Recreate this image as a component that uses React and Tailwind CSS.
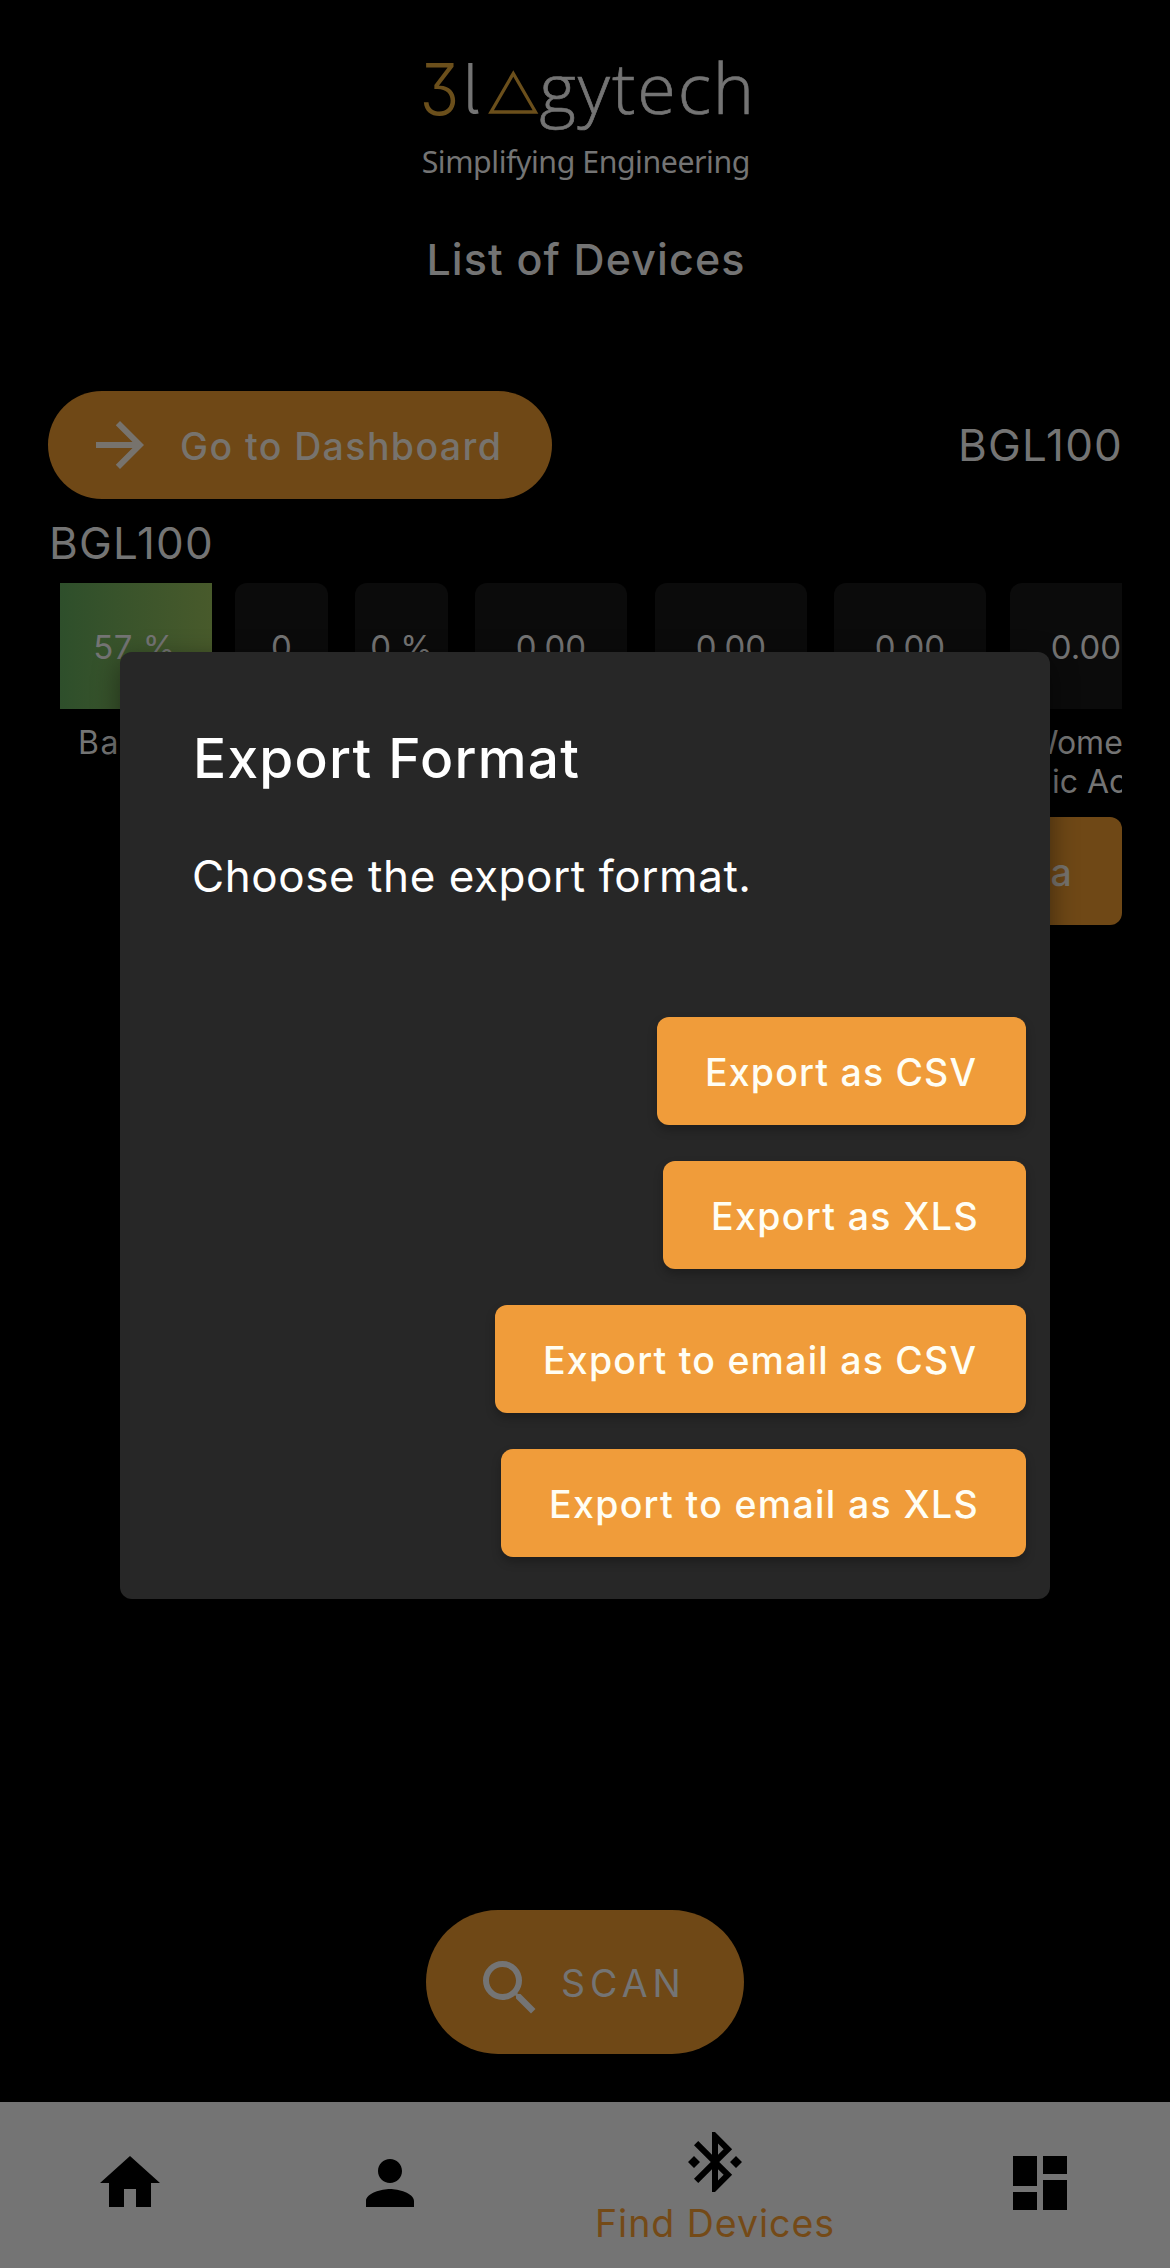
import {
  MdArrowForward,
  MdBluetoothConnected,
  MdDashboard,
  MdHome,
  MdPerson,
  MdSearch,
} from "react-icons/md";

const tiles = [
  { value: "57 %", box: "ml-3 w-[152px] pr-[3px] tracking-[0.5px] bg-linear-to-r from-[#2e4f2b] to-[#485a2b]", label: "Battery" },
  { value: "0", box: "ml-[23px] w-[93px] rounded-xl bg-[#0b0b0b]" },
  { value: "0 %", box: "ml-[27px] w-[93px] rounded-xl bg-[#0b0b0b]" },
  { value: "0.00", box: "ml-[27px] w-[152px] rounded-xl bg-[#0b0b0b]" },
  { value: "0.00", box: "ml-[28px] w-[152px] rounded-xl bg-[#0b0b0b]" },
  { value: "0.00", box: "ml-[27px] w-[152px] rounded-xl bg-[#0b0b0b]" },
  { value: "0.00", box: "ml-[24px] w-[152px] rounded-xl bg-[#0b0b0b]" },
];

const exportOptions = [
  { text: "Export as CSV", style: "w-[369px] tracking-[1.17px]" },
  { text: "Export as XLS", style: "w-[363px] tracking-[1.35px]" },
  { text: "Export to email as CSV", style: "w-[531px] tracking-[1.21px]" },
  { text: "Export to email as XLS", style: "w-[525px] tracking-[1.32px]" },
];

function Logo() {
  return (
    <svg viewBox="400 20 370 190" className="mx-auto h-[190px] w-[370px] shrink-0 overflow-visible" fill="#747474">
      <text
        transform="translate(419.500 115.200) scale(0.91 1)"
        className="font-['Inter'] text-[72px] font-light [font-feature-settings:'cv09']"
        fill="#6b4f1b"
      >
        3
      </text>
      <text
        transform="translate(463 113.500) scale(0.9 1)"
        className="font-['Inter'] text-[70px] font-light [font-feature-settings:'cv05']"
      >
        l
      </text>
      <path d="M513.300 73.500 L535.500 112 H491 Z" fill="none" stroke="#6b4f1b" strokeWidth="3.300" />
      <text
        x="539.500"
        y="113.600"
        className="font-['Open_Sans'] text-[70px] font-light tracking-[1.95px]"
        stroke="#747474"
        strokeWidth="0.700"
      >
        gytech
      </text>
      <text x="421.700" y="172.700" className="font-['Noto_Sans'] text-[30.3px] tracking-[-0.45px]">
        Simplifying Engineering
      </text>
    </svg>
  );
}

function Readings() {
  return (
    <section className="ml-[48px] flex h-[218px] w-[1074px] shrink-0 overflow-hidden">
      {tiles.map((tile, i) => (
        <div key={i} className="shrink-0">
          <div className={`flex h-[126px] items-center justify-center pt-[3px] text-[33px] ${tile.box}`}>
            {tile.value}
          </div>
          {tile.label && (
            <div className="mt-[14px] ml-[30px] text-[32px] leading-[39px] tracking-[1.5px]">
              {tile.label}
            </div>
          )}
          {i === tiles.length - 1 && (
            <div className="mt-[14px] ml-[24px] w-[152px] pl-[17px] text-[32px] leading-[39px] whitespace-nowrap">
              Women
              <div className="pl-[25px]">ic Acid</div>
            </div>
          )}
        </div>
      ))}
    </section>
  );
}

function NavBar() {
  return (
    <nav className="flex h-[166px] shrink-0 bg-[#747474] text-black">
      <a className="flex w-[260px] justify-center pt-[45px]">
        <MdHome size={72} />
      </a>
      <a className="flex w-[260px] justify-center pt-[45px]">
        <MdPerson size={72} />
      </a>
      <a className="flex w-[390px] flex-col items-center pt-[24px]">
        <MdBluetoothConnected size={72} />
        <span className="mt-[3px] text-[37.5px] leading-[46px] tracking-[0.98px] text-[#744a17]">
          Find Devices
        </span>
      </a>
      <a className="flex w-[260px] justify-center pt-[45px]">
        <MdDashboard size={72} />
      </a>
    </nav>
  );
}

function ExportDialog() {
  return (
    <div className="absolute top-[652px] left-[120px] flex h-[947px] w-[930px] flex-col rounded-xl bg-[#272727] pt-[73px] text-white shadow-[0_8px_28px_rgba(0,0,0,0.45)]">
      <h2 className="ml-[73px] text-[55px] leading-[66px] font-medium tracking-[1.25px]">
        Export Format
      </h2>
      <p className="mt-[55px] ml-[72px] text-[44px] leading-[60px] tracking-[0.56px]">
        Choose the export format.
      </p>
      <div className="mt-[111px] flex flex-col items-end gap-9 pr-6">
        {exportOptions.map((o) => (
          <button
            key={o.text}
            className={`flex h-[108px] items-center rounded-xl bg-[#f09c3a] pt-[5px] pl-[48px] text-[37.5px] font-medium whitespace-nowrap text-[#fffef4] shadow-[0_5px_10px_rgba(0,0,0,0.25)] ${o.style}`}
          >
            {o.text}
          </button>
        ))}
      </div>
    </div>
  );
}

export default function App() {
  return (
    <div className="relative flex h-[2268px] w-[1170px] flex-col overflow-hidden bg-black pt-[20px] font-['Inter',sans-serif] text-[#747474]">
      <Logo />
      <h1 className="mt-[19px] pl-[2px] text-center text-[43px] leading-[60px] font-medium tracking-[1.12px]">
        List of Devices
      </h1>
      <div className="mt-[102px] flex h-[108px] shrink-0 items-center justify-between pr-[47px] pl-[48px]">
        <button className="flex h-[108px] w-[504px] items-center rounded-full bg-[#6f4816] pl-[36px] text-[#77736d]">
          <MdArrowForward size={72} />
          <span className="ml-[24px] pt-[3px] text-[37.5px] leading-[48px] font-medium tracking-[1.4px] whitespace-nowrap">
            Go to Dashboard
          </span>
        </button>
        <span className="text-[44px] leading-[52px] tracking-[1.17px]">BGL100</span>
      </div>
      <div className="flex h-[84px] shrink-0 items-center pt-1 pl-[49px] text-[44px] leading-[52px] tracking-[1.17px]">
        BGL100
      </div>
      <Readings />
      <button className="mt-4 mr-[48px] flex h-[108px] shrink-0 items-center self-end rounded-xl bg-[#6f4816] px-[49px] pt-[4px] text-[37.5px] font-medium tracking-[1.2px] text-[#77736d]">
        Export Data
      </button>
      <button className="mt-auto mb-[48px] flex h-[144px] w-[318px] shrink-0 items-center self-center rounded-full bg-[#6f4816] pl-[48px] text-[#747474]">
        <MdSearch size={72} className="mt-3" />
        <span className="ml-[15px] pt-[3px] text-[37.5px] leading-[48px] tracking-[5px]">SCAN</span>
      </button>
      <NavBar />
      <ExportDialog />
    </div>
  );
}
